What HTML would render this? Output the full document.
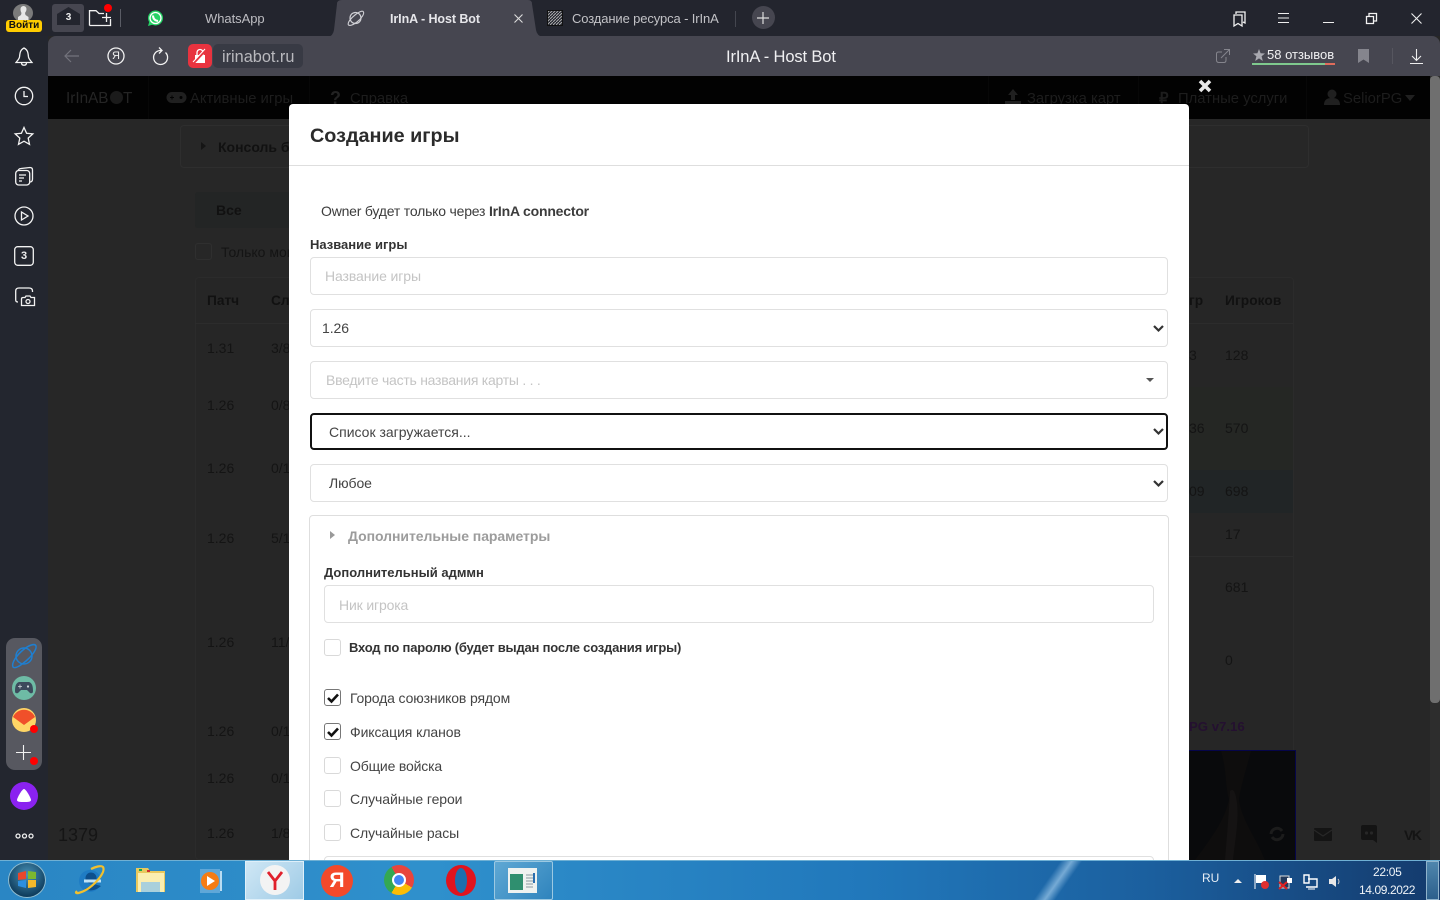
<!DOCTYPE html>
<html lang="ru"><head><meta charset="utf-8"><title>IrInA - Host Bot</title>
<style>
*{box-sizing:border-box}
html,body{margin:0;padding:0;width:1440px;height:900px;overflow:hidden;background:#272727;font-family:"Liberation Sans","Noto Sans CJK SC",sans-serif}
.a{position:absolute}
.t{position:absolute;white-space:nowrap;line-height:18px;height:18px}
.d{color:#141414;font-size:14px}
.db{color:#111;font-size:13.7px;font-weight:bold}
.n{color:#1d1d1d;font-size:14.8px}
.w{color:#d8d8dc;font-size:13px}
.box{position:absolute;background:#fff;border:1px solid #e0e0e0;border-radius:4px;height:38px;left:310px;width:858px}
.m{font-size:14px;color:#444;letter-spacing:-.08px}
.ph{font-size:14px;color:#c4c4c4;letter-spacing:-.15px}
.lbl{font-size:13px;font-weight:bold;color:#333}
.cb{position:absolute;left:324px;width:17px;height:17px;border:1px solid #d9d9d9;border-radius:3px;background:#fff}
.cb.on{border-color:#777}
svg{position:absolute;overflow:visible}
.s{fill:none;stroke:#f2f2f2;stroke-width:1.3}
.chev{fill:none;stroke:#333;stroke-width:2.2}
</style></head><body>

<!-- page behind (dim) -->
<div class="a" style="left:48px;top:119px;width:1382px;height:741px;background:#272727"></div>
<div class="a" style="left:0;top:119px;width:48px;height:741px;background:#23262f"></div>
<div class="a" style="left:1430px;top:76px;width:10px;height:784px;background:#2d2d2d"></div>

<!-- console box -->
<div class="a" style="left:180px;top:125px;width:1129px;height:43px;border:1px solid #2e2e2e;border-radius:4px"></div>
<div class="a" style="left:201px;top:142px;border-left:5px solid #151515;border-top:4px solid transparent;border-bottom:4px solid transparent"></div>
<div class="t db" style="left:218px;top:138px;font-size:14px">Консоль бота</div>
<!-- tabs -->
<div class="a" style="left:195px;top:192px;width:95px;height:36px;background:#232525;border-radius:3px"></div>
<div class="t db" style="left:216px;top:201px;font-size:14px">Все</div>
<div class="a" style="left:195px;top:243px;width:17px;height:17px;border:1px solid #2f2f2f;border-radius:3px"></div>
<div class="t d" style="left:221px;top:243px">Только мои</div>
<!-- table -->
<div class="a" style="left:195px;top:277px;width:1099px;height:583px;background:#262626;border:1px solid #2b2b2b;border-radius:4px"></div>
<div class="a" style="left:1189px;top:387px;width:104px;height:83px;background:#252724"></div>
<div class="a" style="left:1189px;top:470px;width:104px;height:43px;background:#212526"></div>
<div class="a" style="left:195px;top:323px;width:94px;height:1px;background:#2c2c2c"></div>
<div class="a" style="left:1189px;top:323px;width:104px;height:1px;background:#2c2c2c"></div>
<div class="a" style="left:1189px;top:556px;width:104px;height:1px;background:#2c2c2c"></div>
<div class="t db" style="left:207px;top:292px">Патч</div>
<div class="t db" style="left:271px;top:292px">Сл</div>
<div class="t db" style="left:1225px;top:292px;letter-spacing:.1px">Игроков</div>
<div class="t db" style="left:1189px;top:292px">гр</div>
<div class="t d" style="left:207px;top:339px">1.31</div><div class="t d" style="left:271px;top:339px">3/8</div>
<div class="t d" style="left:207px;top:396px">1.26</div><div class="t d" style="left:271px;top:396px">0/8</div>
<div class="t d" style="left:207px;top:459px">1.26</div><div class="t d" style="left:271px;top:459px">0/1</div>
<div class="t d" style="left:207px;top:529px">1.26</div><div class="t d" style="left:271px;top:529px">5/1</div>
<div class="t d" style="left:207px;top:633px">1.26</div><div class="t d" style="left:271px;top:633px">11/</div>
<div class="t d" style="left:207px;top:722px">1.26</div><div class="t d" style="left:271px;top:722px">0/1</div>
<div class="t d" style="left:207px;top:769px">1.26</div><div class="t d" style="left:271px;top:769px">0/1</div>
<div class="t d" style="left:207px;top:824px">1.26</div><div class="t d" style="left:271px;top:824px">1/8</div>
<div class="t d" style="left:1225px;top:346px">128</div>
<div class="t d" style="left:1225px;top:419px">570</div>
<div class="t d" style="left:1225px;top:482px">698</div>
<div class="t d" style="left:1225px;top:525px">17</div>
<div class="t d" style="left:1225px;top:578px">681</div>
<div class="t d" style="left:1225px;top:651px">0</div>
<div class="t d" style="left:1189px;top:346px">3</div>
<div class="t d" style="left:1189px;top:419px">36</div>
<div class="t d" style="left:1189px;top:482px">09</div>
<div class="t" style="left:1189px;top:718px;font-size:13.2px;font-weight:bold;color:#241030">PG v7.16</div>
<div class="t d" style="left:58px;top:826px;font-size:18px;color:#151515">1379</div>
<!-- dark image -->
<div class="a" style="left:1189px;top:750px;width:107px;height:110px;background:#090a0c;border-top:1px solid #05054a;border-right:1px solid #05054a"></div>
<svg style="left:1189px;top:751px" width="106" height="109"><path d="M32 0C38 20 36 36 40 48C36 70 20 90 6 109H76C66 85 52 68 50 48C52 34 58 16 62 0Z" fill="#0e0d0d"/><path d="M41 40C45 36 47 44 48 52C50 70 46 90 44 109H36C38 85 40 60 41 40Z" fill="#151313"/></svg>
<svg style="left:1269px;top:826px" width="16" height="16"><path d="M2 8A6 6 0 0 1 13 5M14 8A6 6 0 0 1 3 11" fill="none" stroke="#1c1c1c" stroke-width="3"/></svg>
<div class="a" style="left:1314px;top:828px;width:18px;height:13px;background:#141414;border-radius:1px"></div>
<svg style="left:1314px;top:828px" width="18" height="13"><path d="M0 2L9 8L18 2" fill="none" stroke="#272727" stroke-width="1.2"/></svg>
<svg style="left:1361px;top:825px" width="16" height="18"><path d="M2 0H14A2 2 0 0 1 16 2V18L12 15H2A2 2 0 0 1 0 13V2A2 2 0 0 1 2 0Z" fill="#141414"/><circle cx="5.5" cy="8" r="1.6" fill="#272727"/><circle cx="10.5" cy="8" r="1.6" fill="#272727"/></svg>
<div class="t" style="left:1404px;top:826px;font-size:14px;font-weight:bold;color:#141414;letter-spacing:-1.5px">VK</div>

<!-- top chrome -->
<div class="a" style="left:0;top:0;width:1440px;height:36px;background:#23252e"></div>
<div class="a" style="left:0;top:36px;width:48px;height:84px;background:#23262f"></div>
<div class="a" style="left:48px;top:36px;width:1392px;height:40px;background:#464650;border-radius:8px 8px 0 0"></div>
<div class="a" style="left:48px;top:76px;width:1382px;height:43px;background:#020202"></div>
<div class="a" style="left:148px;top:76px;width:1px;height:43px;background:#070707"></div>
<div class="a" style="left:309px;top:76px;width:1px;height:43px;background:#070707"></div>
<div class="a" style="left:988px;top:76px;width:1px;height:43px;background:#070707"></div>
<div class="a" style="left:1138px;top:76px;width:1px;height:43px;background:#070707"></div>
<div class="a" style="left:1306px;top:76px;width:1px;height:43px;background:#070707"></div>
<div class="a" style="left:1430px;top:76px;width:10px;height:627px;background:#6f6f6f;border-radius:4px"></div>
<!-- active tab -->
<svg style="left:320px;top:0" width="230" height="37"><path d="M8 37Q13 36 14 30L17 4Q17 0 22 0H208Q212 0 212 4L216 30Q217 36 223 37Z" fill="#464650"/></svg>

<!-- profile -->
<div class="a" style="left:13px;top:4px;width:20px;height:18px;border-radius:50%;background:#7b7b7b"></div>
<svg style="left:14px;top:3px" width="19" height="19"><path d="M9.500 3a3 3 0 0 1 3 3c0 2-1 3-1.500 4l.5 2 3 2v3H4v-3l3-2 .5-2C7 9 6.500 8 6.500 6a3 3 0 0 1 3-3z" fill="#e6e6e6"/></svg>
<div class="a" style="left:6px;top:20px;width:36px;height:12px;background:#ffcc00;border-radius:3px;color:#111;font-size:10px;line-height:12px;text-align:center;font-weight:bold">Войти</div>

<!-- tab left items -->
<div class="a" style="left:52px;top:4px;width:32px;height:28px;background:#464650;border-radius:3px"></div>
<svg style="left:57px;top:7px" width="23" height="18"><path d="M0 7L11.500 0L23 7V18H0Z" fill="#23252e"/></svg>
<div class="t" style="left:64px;top:9px;width:9px;text-align:center;font-size:10px;font-weight:bold;color:#eee">3</div>
<svg style="left:89px;top:10px" width="23" height="16"><path class="s" d="M.5 15.500V.7H7L10 3.500H15M21.500 9V15.500H.5M13 7.500H22M17.500 3V12" /></svg>
<div class="a" style="left:104px;top:4px;width:8px;height:8px;border-radius:50%;background:#ff0000"></div>
<div class="a" style="left:120px;top:9px;width:1px;height:18px;background:#5a5c65"></div>
<svg style="left:147px;top:10px" width="17" height="17"><circle cx="8.500" cy="8" r="7.500" fill="#25d366"/><path d="M1 16L2.500 11L6 14.500Z" fill="#25d366"/><circle cx="8.500" cy="8" r="5.500" fill="none" stroke="#fff" stroke-width="1.300"/><path d="M6 5.500C6 9 8 10.500 11 11" stroke="#fff" stroke-width="2" fill="none"/></svg>
<div class="t w" style="left:205px;top:10px;color:#bdbdc2;letter-spacing:-.05px">WhatsApp</div>
<svg style="left:347px;top:10px" width="17" height="16"><circle cx="8.500" cy="8" r="5.500" fill="none" stroke="#cfcfd4" stroke-width="1.200"/><path d="M1.500 15C0 13 4 8 8 5S15.500 0 16.500 2 14 9 10 12 3 16 1.500 15Z" fill="none" stroke="#cfcfd4" stroke-width="1.100"/></svg>
<div class="t" style="left:390px;top:10px;font-size:12.500px;font-weight:bold;color:#e6e6ea;letter-spacing:-.08px">IrInA - Host Bot</div>
<svg style="left:514px;top:14px" width="9" height="9"><path d="M.5.5L8.500 8.500M8.500.5L.5 8.500" stroke="#ddd" stroke-width="1.100"/></svg>
<svg style="left:547px;top:10px" width="16" height="16"><defs><pattern id="h" width="3" height="3" patternUnits="userSpaceOnUse"><path d="M0 3L3 0" stroke="#aaa" stroke-width="1"/></pattern></defs><rect x=".5" y=".5" width="15" height="15" fill="url(#h)" stroke="#111"/></svg>
<div class="t" style="left:572px;top:10px;font-size:13px;color:#c2c2c6;letter-spacing:-.12px">Создание ресурса - IrInA</div>
<div class="a" style="left:735px;top:11px;width:1px;height:16px;background:#44464f"></div>
<div class="a" style="left:752px;top:6px;width:23px;height:23px;border-radius:50%;background:#464650"></div>
<svg style="left:757px;top:12px" width="12" height="12"><path d="M6 0V12M0 6H12" stroke="#ddd" stroke-width="1.200"/></svg>

<!-- window controls -->
<svg style="left:1233px;top:11px" width="14" height="16"><path class="s" d="M3 3V1H12V12L10 11M1 4H9V15L5 12.500L1 15Z"/></svg>
<svg style="left:1278px;top:13px" width="11" height="10"><path d="M0 .5H11M0 5H11M0 9.500H11" stroke="#eee"/></svg>
<div class="a" style="left:1323px;top:22px;width:11px;height:1px;background:#eee"></div>
<svg style="left:1366px;top:13px" width="11" height="11"><path class="s" d="M3 3V.5H10.500V8H7.500M.5 3.500H7.500V10.500H.5Z" stroke-width="1.100"/></svg>
<svg style="left:1411px;top:13px" width="11" height="11"><path d="M.5.5L10.500 10.500M10.500.5L.5 10.500" stroke="#eee" stroke-width="1.100"/></svg>

<!-- toolbar -->
<svg style="left:64px;top:49px" width="16" height="14"><path d="M15 7H1M7 1L1 7L7 13" fill="none" stroke="#73737c" stroke-width="1.200"/></svg>
<svg style="left:107px;top:47px" width="18" height="18"><circle cx="9" cy="9" r="8" class="s"/></svg>
<div class="t" style="left:107px;top:47px;width:18px;text-align:center;font-size:11px;color:#f0f0f0">Я</div>
<svg style="left:152px;top:47px" width="16" height="17"><path class="s" d="M13.500 5.500A7 7 0 1 1 8 3.500H10M7 .5L10 3.500L7 6.500"/></svg>
<div class="a" style="left:188px;top:44px;width:24px;height:24px;border-radius:5px;background:#e8333f"></div>
<svg style="left:193px;top:49px" width="14" height="14"><rect x="2" y="6" width="10" height="8" fill="#fff"/><path d="M4 6V3.500a3 3 0 0 1 6 0V6" stroke="#fff" fill="none" stroke-width="1.300"/><path d="M1 14L13 1" stroke="#e8333f" stroke-width="2"/><path d="M0 13L12 0" stroke="#fff" stroke-width="1"/></svg>
<div class="a" style="left:213px;top:44px;width:90px;height:24px;border-radius:5px;background:#383a44"></div>
<div class="t" style="left:222px;top:48px;font-size:16.300px;color:#b9b9be">irinabot.ru</div>
<div class="t" style="left:726px;top:48px;font-size:16.500px;color:#f0f0f2;letter-spacing:-.13px">IrInA - Host Bot</div>
<svg style="left:1216px;top:49px" width="14" height="14"><path d="M6 3H2.500Q.5 3 .5 5V11Q.5 13.500 3 13.500H8Q10 13.500 10 11V8M5 9L13 1M8 .5H13.500V6" fill="none" stroke="#85858d"/></svg>
<svg style="left:1253px;top:49px" width="12" height="12"><path d="M6 0L7.600 4.200L12 4.500L8.600 7.300L9.800 12L6 9.400L2.200 12L3.400 7.300L0 4.500L4.400 4.200Z" fill="#a9a9b0"/></svg>
<div class="t" style="left:1267px;top:46px;font-size:13px;color:#f0f0f2;letter-spacing:0">58 отзывов</div>
<div class="a" style="left:1252px;top:63px;width:73px;height:2px;background:#7fc98e"></div>
<div class="a" style="left:1325px;top:63px;width:10px;height:2px;background:#e06c5b"></div>
<svg style="left:1358px;top:49px" width="11" height="14"><path d="M0 0H11V14L5.500 10.500L0 14Z" fill="#85858d"/></svg>
<div class="a" style="left:1392px;top:48px;width:1px;height:16px;background:#56565f"></div>
<svg style="left:1410px;top:49px" width="13" height="15"><path d="M6.500 0V11M2 7L6.500 11.500L11 7M0 14.500H13" fill="none" stroke="#eee" stroke-width="1.100"/></svg>

<!-- nav (dim) -->
<div class="t n" style="left:66px;top:90px;color:#252525;font-size:15.300px">IrInAB</div>
<div class="a" style="left:110px;top:91px;width:13px;height:13px;border-radius:50%;background:#1b1b1b"></div>
<div class="t n" style="left:123px;top:90px;color:#252525;font-size:15.300px">T</div>
<svg style="left:167px;top:92px" width="19" height="11"><path d="M5 0H14A5 5 0 0 1 14 11H5A5 5 0 0 1 5 0Z" fill="#202020"/><path d="M3 5.500H7M5 3.500V7.500" stroke="#020202"/><circle cx="14" cy="5.500" r="1.500" fill="#020202"/></svg>
<div class="t n" style="left:190px;top:90px">Активные игры</div>
<div class="t n" style="left:330px;top:89px;font-weight:bold;font-size:18px;color:#222">?</div>
<div class="t n" style="left:350px;top:90px">Справка</div>
<svg style="left:1005px;top:89px" width="16" height="16"><path d="M8 0L13 6H10V11H6V6H3ZM0 12H16V16H0Z" fill="#202020"/></svg>
<div class="t n" style="left:1027px;top:90px">Загрузка карт</div>
<div class="t n" style="left:1159px;top:90px;font-weight:bold">₽</div>
<div class="t n" style="left:1178px;top:90px">Платные услуги</div>
<svg style="left:1324px;top:89px" width="16" height="16"><circle cx="8" cy="5" r="4.500" fill="#202020"/><path d="M0 16C0 10 4 9 8 9S16 10 16 16Z" fill="#202020"/></svg>
<div class="t n" style="left:1343px;top:90px">SeliorPG</div>
<div class="a" style="left:1405px;top:95px;border-top:6px solid #202020;border-left:5px solid transparent;border-right:5px solid transparent"></div>

<!-- left rail icons -->
<svg style="left:15px;top:47px" width="18" height="20"><path class="s" d="M9 1C5 3 5 6 4.500 10C4 12.500 2 14 1 15.500H17C16 14 14 12.500 13.500 10C13 6 13 3 9 1ZM6.500 16C6.800 19 11.200 19 11.500 16"/></svg>
<svg style="left:14px;top:86px" width="20" height="20"><circle cx="10" cy="10" r="8.700" class="s"/><path class="s" d="M10 5V10.500H14"/></svg>
<svg style="left:14px;top:126px" width="20" height="20"><path class="s" d="M10 1.500L12.600 7.300L18.800 7.900L14.200 12.100L15.500 18.300L10 15.200L4.500 18.300L5.800 12.100L1.200 7.900L7.400 7.300Z"/></svg>
<svg style="left:15px;top:167px" width="19" height="19"><rect x=".7" y="3.500" width="14" height="14.500" rx="3" class="s"/><path class="s" d="M3 3.500Q4 1.500 6 1.500L15 .5Q17.500 .5 17.500 3V12Q17.500 15 15 15M4 8H11M4 11H9M4 14H7"/></svg>
<svg style="left:14px;top:206px" width="20" height="20"><circle cx="10" cy="10" r="9" class="s"/><path class="s" d="M7.500 6V14L14 10Z"/></svg>
<svg style="left:14px;top:246px" width="20" height="20"><rect x=".7" y=".7" width="18.600" height="18.600" rx="3" class="s"/></svg>
<div class="t" style="left:14px;top:247px;width:20px;text-align:center;font-size:11px;font-weight:bold;color:#eee">3</div>
<svg style="left:15px;top:287px" width="20" height="20"><path class="s" d="M.7 13V4Q.7 1 4 1H14Q17.500 1 17.500 4V5M.7 13Q.7 15 3 15"/><path class="s" d="M6.500 12V18.500H19.500V10.500H16L15 9H11L10 10.500H8Q6.500 10.500 6.500 12Z"/><circle cx="13" cy="14.500" r="2" class="s"/></svg>

<!-- side panel -->
<div class="a" style="left:6px;top:638px;width:36px;height:132px;border-radius:9px;background:#575860"></div>
<svg style="left:11px;top:643px" width="26" height="26"><circle cx="13" cy="13" r="8" fill="none" stroke="#1f7fd0" stroke-width="1.500"/><path d="M2 24C0 20 6 12 12 7S24 0 25 3 21 13 15 18 4 26 2 24Z" fill="none" stroke="#1f7fd0" stroke-width="1.500"/></svg>
<div class="a" style="left:12px;top:676px;width:24px;height:24px;border-radius:50%;background:#6ebba5"></div>
<svg style="left:15px;top:682px" width="18" height="12"><path d="M4 0H14Q18 1 18 9Q18 12 15 11L12 8H6L3 11Q0 12 0 9Q0 1 4 0Z" fill="#3c4a5c"/><path d="M3 4.500H7M5 2.500V6.500" stroke="#cfd8dc" stroke-width=".8"/><circle cx="13" cy="4.500" r="1.100" fill="#cfd8dc"/></svg>
<div class="a" style="left:12px;top:708px;width:24px;height:24px;border-radius:50%;background:#ffd666;overflow:hidden"></div>
<svg style="left:12px;top:708px" width="24" height="24"><path d="M1 9A12 12 0 0 1 23 9L12 17Z" fill="#f0502a"/></svg>
<div class="a" style="left:30px;top:725px;width:8px;height:8px;border-radius:50%;background:#f00"></div>
<svg style="left:16px;top:745px" width="15" height="15"><path d="M7.500 0V15M0 7.500H15" stroke="#f2f2f2" stroke-width="1.100"/></svg>
<div class="a" style="left:30px;top:757px;width:8px;height:8px;border-radius:50%;background:#f00"></div>
<div class="a" style="left:10px;top:782px;width:28px;height:28px;border-radius:50%;background:#8a22f0"></div>
<svg style="left:17px;top:789px" width="14" height="13"><path d="M7 0C9 0 14 9 14 11C14 13 11 13 7 13S0 13 0 11C0 9 5 0 7 0Z" fill="#fff"/></svg>
<svg style="left:15px;top:833px" width="19" height="6"><circle cx="3" cy="3" r="2" fill="none" stroke="#eee" stroke-width="1.300"/><circle cx="9.500" cy="3" r="2" fill="none" stroke="#eee" stroke-width="1.300"/><circle cx="16" cy="3" r="2" fill="none" stroke="#eee" stroke-width="1.300"/></svg>

<!-- modal -->
<div class="a" style="left:289px;top:104px;width:900px;height:756px;background:#fff;border-radius:4px 4px 0 0"></div>
<div class="a" style="left:289px;top:165px;width:900px;height:1px;background:#dedede"></div>
<svg style="left:1198px;top:79px" width="14" height="14"><path d="M2 2L12 12M12 2L2 12" stroke="#e8e8e8" stroke-width="3.600"/></svg>
<div class="t" style="left:310px;top:124px;height:24px;line-height:24px;font-size:19.800px;font-weight:bold;color:#2b2b2b">Создание игры</div>
<div class="t" style="left:321px;top:202px;font-size:14px;color:#3c3c3c;letter-spacing:-.2px">Owner будет только через <b>IrInA connector</b></div>
<div class="t lbl" style="left:310px;top:236px">Название игры</div>
<div class="box" style="top:257px"></div>
<div class="t ph" style="left:325px;top:267px;letter-spacing:-.1px">Название игры</div>
<div class="box" style="top:309px"></div>
<div class="t m" style="left:322px;top:319px">1.26</div>
<svg style="left:1153px;top:325px" width="11" height="7"><path class="chev" d="M1 1L5.500 5.500L10 1"/></svg>
<div class="box" style="top:361px"></div>
<div class="t ph" style="left:326px;top:371px;letter-spacing:-.25px">Введите часть названия карты . . .</div>
<div class="a" style="left:1146px;top:378px;border-top:4px solid #555;border-left:4px solid transparent;border-right:4px solid transparent"></div>
<div class="box" style="top:413px;border:2px solid #111;height:37px"></div>
<div class="t m" style="left:329px;top:423px;letter-spacing:0">Список загружается...</div>
<svg style="left:1153px;top:428px" width="11" height="7"><path class="chev" d="M1 1L5.500 5.500L10 1"/></svg>
<div class="box" style="top:464px"></div>
<div class="t m" style="left:329px;top:474px">Любое</div>
<svg style="left:1153px;top:480px" width="11" height="7"><path class="chev" d="M1 1L5.500 5.500L10 1"/></svg>

<!-- fieldset -->
<div class="a" style="left:309px;top:515px;width:860px;height:360px;border:1px solid #dedede;border-radius:4px"></div>
<div class="a" style="left:330px;top:531px;border-left:5px solid #999;border-top:4px solid transparent;border-bottom:4px solid transparent"></div>
<div class="t" style="left:348px;top:527px;font-size:14px;font-weight:bold;color:#9c9c9c;letter-spacing:-.05px">Дополнительные параметры</div>
<div class="t lbl" style="left:324px;top:564px">Дополнительный адммн</div>
<div class="box" style="left:324px;top:585px;width:830px"></div>
<div class="t ph" style="left:339px;top:596px">Ник игрока</div>
<div class="cb" style="top:639px"></div>
<div class="t lbl" style="left:349px;top:639px;letter-spacing:-.2px">Вход по паролю (будет выдан после создания игры)</div>

<div class="cb on" style="top:689px"></div>
<svg style="left:327px;top:693px" width="12" height="10"><path d="M1 5L4.500 8.500L11 1.500" fill="none" stroke="#111" stroke-width="2.600"/></svg>
<div class="t m" style="left:350px;top:689px;letter-spacing:-.14px">Города союзников рядом</div>
<div class="cb on" style="top:723px"></div>
<svg style="left:327px;top:727px" width="12" height="10"><path d="M1 5L4.500 8.500L11 1.500" fill="none" stroke="#111" stroke-width="2.600"/></svg>
<div class="t m" style="left:350px;top:723px">Фиксация кланов</div>
<div class="cb" style="top:757px"></div>
<div class="t m" style="left:350px;top:757px;letter-spacing:-.17px">Общие войска</div>
<div class="cb" style="top:790px"></div>
<div class="t m" style="left:350px;top:790px">Случайные герои</div>
<div class="cb" style="top:824px"></div>
<div class="t m" style="left:350px;top:824px">Случайные расы</div>
<div class="box" style="left:324px;top:856px;width:830px"></div>

<!-- taskbar -->
<div class="a" style="left:0;top:860px;width:1440px;height:40px;background:linear-gradient(90deg,#2a86c4 0,#2f90cc 30%,#2178bb 60%,#1b5f9e 80%,#143a6c 100%);border-top:1px solid #6fb0d4"></div>
<div class="a" style="left:1030px;top:861px;width:60px;height:39px;background:linear-gradient(125deg,transparent 35%,rgba(190,225,250,.55) 48%,transparent 60%)"></div>
<div class="a" style="left:8px;top:862px;width:38px;height:36px;border-radius:50%;background:radial-gradient(circle at 50% 35%,#4a93b8,#0e3c5c 75%);border:1px solid #8fbcd0"></div>
<svg style="left:17px;top:870px" width="20" height="19"><path d="M1 3L9 1V9L1 10Z" fill="#e8472c"/><path d="M11 1L19 2V9L11 9Z" fill="#7cb82f"/><path d="M1 11L9 10V18L1 16Z" fill="#2c8fe0"/><path d="M11 10L19 10V17L11 18Z" fill="#f4b92a"/></svg>
<svg style="left:73px;top:864px" width="34" height="32"><circle cx="17" cy="17" r="11" fill="#1f7cc4"/><circle cx="18" cy="14" r="5.500" fill="#0d4f8c"/><rect x="11" y="15.500" width="17" height="3" fill="#bfe2f5"/><path d="M21 20L28 22Q20 29 12 25Z" fill="#0d4f8c"/><path d="M4 27C0 31 9 29 16 24S33 8 30 3C28 1 22 3 18 5" fill="none" stroke="#f3c02d" stroke-width="2.200"/></svg>
<svg style="left:135px;top:866px" width="32" height="28"><path d="M1 2H13L15 5H30V26H1Z" fill="#e9c95e"/><rect x="3" y="7" width="26" height="19" fill="#fbeeb0"/><path d="M6 16H25V26H6Z" fill="#a9d0dc"/><rect x="4" y="3" width="3" height="2" fill="#19a84a"/><rect x="12" y="4" width="3" height="2" fill="#d03030"/></svg>
<svg style="left:199px;top:868px" width="26" height="26"><rect x="1" y="1" width="20" height="24" fill="#5fa7d8"/><rect x="21" y="3" width="2" height="20" fill="#b9dcf2"/><circle cx="11" cy="13" r="9" fill="#f57c14"/><path d="M8 8L16 13L8 18Z" fill="#fff"/></svg>
<div class="a" style="left:245px;top:861px;width:59px;height:39px;background:linear-gradient(135deg,#cfe7f5,#9fcbe6);border:1px solid #dff0fa"></div>
<div class="a" style="left:260px;top:865px;width:30px;height:30px;border-radius:50%;background:#f3f3f3"></div>
<svg style="left:266px;top:871px" width="18" height="19"><path d="M2 1L9 10L16 1M9 10V19" fill="none" stroke="#e0202c" stroke-width="2.800"/></svg>
<div class="a" style="left:321px;top:865px;width:32px;height:32px;border-radius:50%;background:#f3492a"></div>
<div class="t" style="left:321px;top:872px;width:32px;text-align:center;font-size:21px;font-weight:bold;color:#fff">Я</div>
<div class="a" style="left:384px;top:865px;width:30px;height:30px;border-radius:50%;background:conic-gradient(#e8453c 0 120deg,#fbbc05 120deg 210deg,#34a853 210deg 330deg,#e8453c 330deg)"></div>
<div class="a" style="left:392px;top:873px;width:14px;height:14px;border-radius:50%;background:#4285f4;border:2px solid #fff"></div>
<div class="a" style="left:446px;top:865px;width:30px;height:31px;border-radius:50%;background:#e0141e"></div>
<div class="a" style="left:455px;top:868px;width:12px;height:25px;border-radius:50%;background:#1c6fae"></div>
<div class="a" style="left:494px;top:861px;width:59px;height:39px;background:linear-gradient(135deg,#5fa8d4,#2f84bd);border:1px solid #9cc9e2;border-radius:2px"></div>
<svg style="left:507px;top:867px" width="31" height="27"><rect x="1" y="1" width="29" height="25" fill="#eef2f0"/><rect x="3" y="7" width="13" height="16" fill="#2f8f6f"/><path d="M19 8H26M19 11H26M19 14H26M19 17H26M19 20H26" stroke="#8a9aa0"/><rect x="26" y="6" width="2" height="10" fill="#2a6fb0"/></svg>

<!-- tray -->
<div class="t" style="left:1202px;top:869px;font-size:12px;color:#e8eef5">RU</div>
<div class="a" style="left:1234px;top:879px;border-bottom:4px solid #eee;border-left:4px solid transparent;border-right:4px solid transparent"></div>
<svg style="left:1254px;top:874px" width="16" height="15"><path d="M1 0V15" stroke="#fff"/><path d="M2 1H12V9H2Z" fill="#fff"/><circle cx="11" cy="11" r="4" fill="#e03030"/></svg>
<svg style="left:1278px;top:874px" width="15" height="15"><rect x="2" y="2" width="9" height="12" fill="#223a5c" stroke="#ddd"/><path d="M9 4H14V9H9Z" fill="#fff"/><path d="M1 8L9 15M9 8L1 15" stroke="#e02020" stroke-width="2"/></svg>
<svg style="left:1303px;top:875px" width="15" height="14"><path d="M1 0H6V8H1ZM5 4H14V12H3" fill="none" stroke="#fff" stroke-width="1.400"/><path d="M5 14H12" stroke="#fff"/></svg>
<svg style="left:1328px;top:875px" width="13" height="13"><path d="M1 4H4L8 1V12L4 9H1Z" fill="#e8e8e8"/><path d="M10 4Q12 6.500 10 9" stroke="#ccc" fill="none"/></svg>
<div class="t" style="left:1373px;top:863px;font-size:12px;color:#f0f4f8;letter-spacing:-.3px">22:05</div>
<div class="t" style="left:1359px;top:881px;font-size:12px;color:#f0f4f8;letter-spacing:-.4px">14.09.2022</div>
<div class="a" style="left:1426px;top:861px;width:13px;height:39px;background:linear-gradient(180deg,#4f86ad,#2c5f8c);border:1px solid #8fb3cc"></div>
</body></html>
